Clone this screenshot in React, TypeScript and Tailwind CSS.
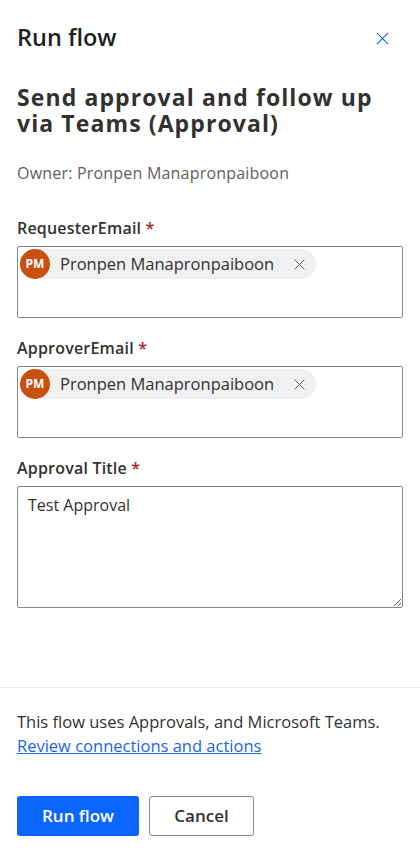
import React from "react";

const font = { fontFamily: '"Open Sans", "Noto Sans", sans-serif' };

const CloseIcon = ({ className }: { className?: string }) => (
  <svg viewBox="0 0 16 16" className={className} fill="none" stroke="currentColor" strokeWidth={1.2}>
    <path d="M2 2l12 12M14 2L2 14" />
  </svg>
);

const PersonChip = ({ name, initials }: { name: string; initials: string }) => (
  <div className="flex items-center h-[30px] rounded-full bg-[#f0f0f0] pr-[10px] w-fit">
    <div className="w-[30px] h-[30px] rounded-full bg-[#ca5010] text-white text-[12px] font-bold flex items-center justify-center">
      {initials}
    </div>
    <span className="ml-[10px] text-[16.5px] text-[#323130]">{name}</span>
    <CloseIcon className="ml-[19px] w-[13px] h-[13px] text-[#605e5c]" />
  </div>
);

const Label = ({ children }: { children: React.ReactNode }) => (
  <div className="text-[16px] font-semibold text-[#323130] leading-[20px] mb-[8px] tracking-[0.2px]">
    {children} <span className="text-[#a4262c]">*</span>
  </div>
);

const App = () => {
  return (
    <div className="w-[420px] h-[850px] bg-white flex flex-col" style={font}>
      <div className="flex-1 px-[17px]">
        <div className="flex items-center justify-between h-[40px] mt-[18px]">
          <h1 className="text-[23.5px] font-semibold text-[#201f1e]">Run flow</h1>
          <button className="text-[#1a66e6] mr-[13px]">
            <CloseIcon className="w-[15px] h-[15px]" />
          </button>
        </div>
        <h2 className="mt-[26px] text-[23px] font-bold leading-[26px] text-[#323130] tracking-[1.1px]">
          Send approval and follow up via Teams (Approval)
        </h2>
        <div className="mt-[26px] text-[16px] leading-[22px] text-[#605e5c] tracking-[0.2px]">Owner: Pronpen Manapronpaiboon</div>

        <div className="mt-[34px]">
          <Label>RequesterEmail</Label>
          <div className="h-[72px] border border-[#8a8886] rounded-[2px] p-[2px]">
            <PersonChip name="Pronpen Manapronpaiboon" initials="PM" />
          </div>
        </div>
        <div className="mt-[20px]">
          <Label>ApproverEmail</Label>
          <div className="h-[72px] border border-[#8a8886] rounded-[2px] p-[2px]">
            <PersonChip name="Pronpen Manapronpaiboon" initials="PM" />
          </div>
        </div>
        <div className="mt-[20px]">
          <Label>Approval Title</Label>
          <textarea
            defaultValue="Test Approval"
            className="block w-full h-[122px] border border-[#8a8886] rounded-[2px] px-[10px] py-[6px] text-[16px] text-[#323130] outline-none resize-y"
            style={font}
          />
        </div>
      </div>

      <div className="border-t border-[#edebe9] px-[17px] pt-[22px] pb-[14px]">
        <p className="text-[16.5px] text-[#323130] leading-[24px]">
          This flow uses Approvals, and Microsoft Teams.
        </p>
        <a href="#" className="text-[16.5px] text-[#1a66e6] underline leading-[24px]">
          Review connections and actions
        </a>
        <div className="flex gap-[10px] mt-[38px]">
          <button className="w-[122px] h-[40px] rounded-[3px] bg-[#0a66ff] text-white text-[17px] font-semibold">
            Run flow
          </button>
          <button className="w-[105px] h-[40px] rounded-[3px] border border-[#8a8886] bg-white text-[#323130] text-[17px] font-semibold">
            Cancel
          </button>
        </div>
      </div>
    </div>
  );
};

export default App;
